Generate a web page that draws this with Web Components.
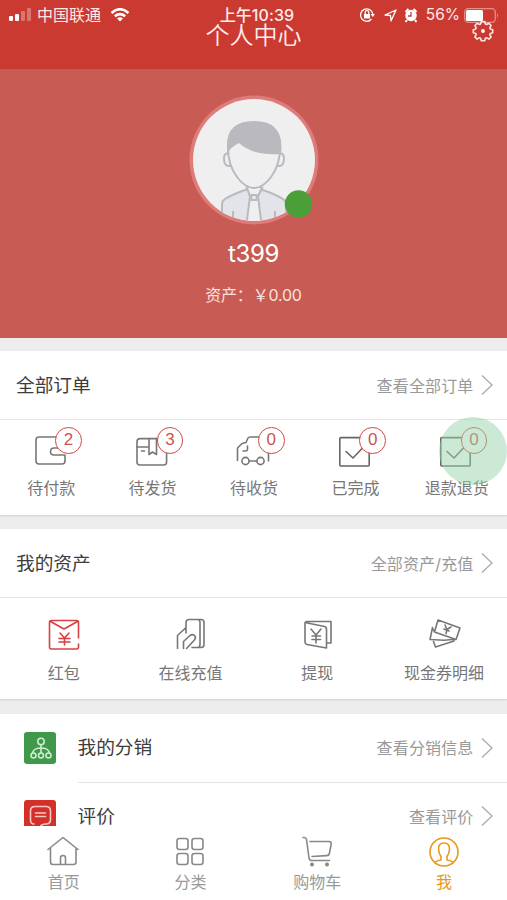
<!DOCTYPE html>
<html lang="zh-CN">
<head>
<meta charset="utf-8">
<title>个人中心</title>
<style>
  html, body { margin: 0; height: 900px; overflow: hidden; background: #ededed; }
  body { font-family: Inter, "Noto Sans CJK SC", sans-serif; }
</style>
</head>
<body>
<member-page></member-page>
<script>
const stroke = (body, c = '#777') => `<g fill="none" stroke="${c}" stroke-width="1.6" stroke-linecap="round" stroke-linejoin="round">${body}</g>`;
const check = stroke('<rect x="0.8" y="2.6" width="29.4" height="28.4" rx="1"/><path d="M7 16.5l7 6.5 10-10.5"/>', '#666');
const ICONS = {
  wallet: stroke('<path d="M30 21.5V26q0 3-3 3H4q-3 0-3-3V5q0-3 3-3H27q3 0 3 3v8H19q-3.5 0-3.5 3.5t3.500 3.500H30z"/>'),
  parcel: stroke('<rect x="1" y="3.6" width="29.6" height="26.4" rx="3"/><path d="M1 12H13M13 3.6V19.5l3.500-2.500 4 2.500V3.6M5.500 16h3"/>'),
  truck: stroke('<path d="M-.5 25.500V13L4 8.500 8 7.500 9.500 4Q10 2 12 2H26M30.500 18V26M9.500 11v3q0 2-2 2H5M11.200 26H18.800"/><circle cx="7.500" cy="26" r="3.600"/><circle cx="22.500" cy="26" r="3.600"/>'),
  check,
  envelope: stroke('<path d="M31.500 19V3.500q0-2-2-2H4.500q-2 0-2 2V28q0 2 2 2H29.500q2 0 2-2v-3M3.500 2.500L17 10 30.500 2.500M13 14l4.500 5 4.500-5M17.500 19v7M12 19.500h11M12 23h11"/>', '#d5423f'),
  card: stroke('<path d="M12 14V3.500Q12 .5 15 .5H27q3 0 3 3V25.500q0 3-3 3H18M23.500 .500q2.500 0 2.500 3V25.500q0 3-2.500 3M11.500 9L3.500 16.500V29.500M9.500 29.500V22.500L16 16.500q3-2 5 .5 1.300 2-1 4.500L12.500 29.500"/>'),
  coupon: stroke('<path d="M4 3.500L23.500 7.500q2 .5 2 3V29L6 25.500Q4 25 4 23zM4 3.500Q5 2.500 6 2.500H30V24H26M10 10l5 6 5-6M15 16v8M11 17h8.500M11 20.500h8.500"/>'),
  notes: stroke('<path d="M10 1L32 9 28 20.500 6.500 13zM4.500 8.500L2 20.500l14 .8 11.500-1M5.500 22.500l2 5.500L26 22M4.500 9l2 4M17 6l2 4.500 4-2.500M19 10.500l-1 4M16 10l5 2"/>'),
  home: stroke('<path d="M1 13.500L16 1.500 31 13.500M3.500 12V26q0 2.500 2.500 2.500H26.500q2.500 0 2.500-2.500V12M13.500 28.500V22q0-2.500 2.500-2.500t2.500 2.500v6.500"/>', '#888'),
  grid: stroke('<rect x="3" y="2.500" width="11" height="11" rx="2.500"/><rect x="18" y="2.500" width="11" height="11" rx="2.500"/><rect x="3" y="17.500" width="11" height="11" rx="2.500"/><rect x="18" y="17.500" width="11" height="11" rx="2.500"/>', '#888'),
  cart: stroke('<path d="M2 1.500H3.500Q5 1.500 5.500 3.500L8 22q.5 2.500 2.500 2.500H28.500M9 5.500H28q2.500 0 2.200 2.500L28.500 17q-.5 2.500-3 2.600L11 20.500"/>', '#888') + '<circle cx="11" cy="28.500" r="2" fill="#888"/><circle cx="26" cy="28.500" r="2" fill="#888"/>',
  me: stroke('<circle cx="16" cy="16" r="14"/><path d="M6.500 26.500Q9 24.500 13 24v-3.500Q10.500 17 10.500 13q0-6 5.500-6t5.500 6q0 4-2.500 7.500V24q4 .5 6.500 2.500"/>', '#e9981f'),
  gear: stroke('<path d="M8.300 1.500h3.400l.7 2.500 1.200.5 2.300-1.300 2.200 2.300-1.300 2.300.5 1.200 2.400.7v3l-2.400.7-.5 1.200 1.300 2.300-2.200 2.200-2.300-1.300-1.200.5-.7 2.500H8.300l-.7-2.500-1.200-.5-2.300 1.300-2.200-2.200 1.300-2.300-.5-1.200-2.400-.7v-3l2.400-.7.5-1.200L1.900 5.500l2.200-2.300 2.300 1.300 1.200-.5z"/>', '#fbe3e0') + '<circle cx="10" cy="11" r="1.900" fill="#fff"/>',
  tree: '<rect width="32" height="32" rx="3" fill="#40994a"/>' + stroke('<circle cx="17" cy="9.500" r="3.200"/><circle cx="9.500" cy="23.500" r="2.500"/><circle cx="17" cy="23.500" r="2.500"/><circle cx="24.500" cy="23.500" r="2.500"/><path d="M17 12.700V21M8.500 21Q9.500 16 17 16t8.500 5"/>', '#cdebcf'),
  comment: '<rect width="32" height="32" rx="3" fill="#d3302a"/>' + stroke('<path d="M10 24Q6.500 24 6.500 20V11q0-4.500 4.500-4.500H22q4.500 0 4.500 4.500v8.500q0 4.500-4.500 4.500-5 0-5.500 3M11.500 13h10M11.500 16.500h10"/>', '#f5c8c5'),
};

class UiIcon extends HTMLElement {
  connectedCallback() {
    const w = this.getAttribute('w') || 32, h = this.getAttribute('h') || w;
    this.attachShadow({mode: 'open'}).innerHTML =
      `<style>:host{display:block;flex:none;width:${w}px;height:${h}px}svg{display:block;overflow:visible}</style>
       <svg width="${w}" height="${h}" viewBox="0 0 ${w} ${h}">${ICONS[this.getAttribute('name')]}</svg>`;
  }
}
customElements.define('ui-icon', UiIcon);

class StatusBar extends HTMLElement {
  connectedCallback() {
    this.attachShadow({mode: 'open'}).innerHTML = `
    <style>
      :host{display:grid;grid-template-columns:1fr auto 1fr;align-items:center;height:30px;padding:0 8px 0 9px;box-sizing:border-box;color:#fbe9e7;font-size:16px;line-height:20px}
      div{display:flex;align-items:center}
      .r{justify-content:flex-end}
      b{font-weight:500;padding-left:6px;color:#fdecea;font-size:16px;letter-spacing:.1px}
      svg{display:block;flex:none}
      .n{margin-left:5px}
      .w{margin-left:9px}
      .p{margin:0 4px 0 9px;font-size:15.500px}
    </style>
    <div>
      <svg width="23" height="14"><g fill="#fff"><rect y="8" width="4" height="5" rx="1"/><rect x="6" y="6" width="4" height="7" rx="1"/><g opacity=".3"><rect x="12" y="3" width="4" height="10" rx="1"/><rect x="18" y="0" width="4" height="13" rx="1"/></g></g></svg>
      <span class="n">中国联通</span>
      <svg class="w" width="20" height="14" fill="none" stroke="#fff" stroke-width="2.600"><path d="M1.500 5Q10-2.500 18.500 5M4.800 8.300Q10 4 15.200 8.300"/><path d="M7 10.500Q10 8 13 10.500L10 13.500z" fill="#fff" stroke="none"/></svg>
    </div>
    <b>上午10:39</b>
    <div class="r">
      <svg width="58" height="16" viewBox="0 0 58 16" fill="none" stroke="#fff" stroke-width="1.300"><path d="M12.500 12A6.200 6.200 0 1 1 13.800 7"/><path d="M11.500 7h4.500l-2.200 3z" fill="#fff" stroke="none"/><rect x="5" y="7" width="6" height="4.500" fill="#fff" stroke="none"/><path d="M6.200 7V5.500a1.800 1.800 0 0 1 3.600 0V7"/><path d="M26 8L37 3l-5 11-.5-5.500z" stroke-linejoin="round"/><circle cx="52" cy="8.500" r="5.700" fill="#fff" stroke="none"/><path d="M46.500 5l3-3M54.500 2l3 3M48 13l-1.500 2M56 13l1.500 2" stroke-width="2"/><path d="M52 5v4h-3" stroke="#cb3a31"/></svg>
      <span class="p">56%</span>
      <svg width="35" height="15"><rect x=".7" y=".7" width="30.600" height="13.600" rx="3.500" fill="none" stroke="#e58e87" stroke-width="1.300"/><rect x="2" y="2" width="17" height="11" rx="1.500" fill="#fff"/><path d="M33 5q2 2.500 0 5z" fill="#e58e87"/></svg>
    </div>`;
  }
}
customElements.define('status-bar', StatusBar);

class PageHeader extends HTMLElement {
  connectedCallback() {
    this.attachShadow({mode: 'open'}).innerHTML = `
    <style>
      :host{display:block;position:relative;height:69px;background:#cb3a31}
      h1{position:absolute;left:0;right:0;top:19px;margin:0;text-align:center;font-weight:350;font-size:24px;line-height:30px;color:#fdeeec;font-family:"Noto Sans CJK SC",sans-serif}
      ui-icon{position:absolute;right:14.500px;top:20px}
    </style>
    <status-bar></status-bar><h1><slot></slot></h1><ui-icon name="gear" w="20" h="22"></ui-icon>`;
  }
}
customElements.define('page-header', PageHeader);

class ProfileHero extends HTMLElement {
  connectedCallback() {
    this.attachShadow({mode: 'open'}).innerHTML = `
    <style>
      :host{display:flex;flex-direction:column;align-items:center;height:269px;background:#c85b53;color:#fff;box-sizing:border-box;padding-top:26px}
      svg{display:block}
      .name{font-size:24px;line-height:30px;margin-top:14px;letter-spacing:-.4px}
      .money{font-size:16px;line-height:20px;margin-top:16px;color:#f8e2df;letter-spacing:-.2px}
    </style>
    <svg width="130" height="130" viewBox="0 0 130 130">
      <defs><clipPath id="c"><circle cx="65" cy="65" r="61"/></clipPath></defs>
      <circle cx="65" cy="65" r="64.500" fill="#dd7c79"/><circle cx="65" cy="65" r="61" fill="#f0eff0"/>
      <g clip-path="url(#c)" stroke="#b9bac0" stroke-width="2">
        <path d="M33 130V109q0-3 3-5 8-5 23-10H71q15 5 23 10 3 2 3 5v21z" fill="#e3e4ea"/>
        <path d="M58 93l3 8-4 32H73l-4-32 4-8z" fill="#f0eff0"/><path d="M58 93l3 8h8l4-8" fill="#f0eff0"/><rect x="62.500" y="100" width="5" height="5" fill="#f0eff0"/>
        <path d="M44 116v14M86 116v14" fill="none"/>
        <path d="M40 59q-5-2-5 5 0 8 7 7M90 59q5-2 5 5 0 8-7 7" fill="#f0eff0"/>
        <path d="M39 53Q39 70 48 82q8 11 17 11t17-11q9-12 9-29L65 35z" fill="#f0eff0"/>
        <path d="M38.500 58Q34 26 65 26T92 59Q64 61 50 48 42 52 38.500 58z" fill="#b9b9be" stroke="none"/>
      </g>
      <circle cx="109.500" cy="109" r="13.700" fill="#4b9f38"/>
    </svg>
    <div class="name"><slot name="name"></slot></div><div class="money"><slot name="money"></slot></div>`;
  }
}
customElements.define('profile-hero', ProfileHero);

class LinkRow extends HTMLElement {
  connectedCallback() {
    this.attachShadow({mode: 'open'}).innerHTML = `
    <style>
      :host{display:flex;align-items:center;box-sizing:border-box;height:69px;padding:0 14.500px 0 16px;background:#fff;border-bottom:1.500px solid #e4e4e4}
      .t{flex:1;font-size:18.700px;line-height:26px;color:#3c3c3c;padding-top:1px}
      .m{font-size:16px;line-height:22px;color:#999;letter-spacing:.15px;padding-top:1px}
      svg{margin-left:7px;flex:none}
    </style>
    <span class="t"><slot></slot></span><span class="m">${this.getAttribute('more')}</span>
    <svg width="12" height="20" fill="none" stroke="#aaa" stroke-width="1.300"><path d="M1 .5L11 10 1 19.500"/></svg>`;
  }
}
customElements.define('link-row', LinkRow);

class IconTile extends HTMLElement {
  connectedCallback() {
    const badge = this.getAttribute('badge');
    this.attachShadow({mode: 'open'}).innerHTML = `
    <style>
      :host{display:flex;flex-direction:column;align-items:center;flex:1 1 0;min-width:0}
      .i{position:relative}
      .b{position:absolute;left:20.500px;top:-8px;width:26.500px;height:26.500px;box-sizing:border-box;border:1.600px solid #cf4a41;border-radius:50%;background:#fff;color:#c9554c;text-align:center;font-family:"Liberation Sans",sans-serif;font-size:17px;line-height:24px}
      .l{margin-top:var(--tile-gap,10px);padding-left:1px;font-size:16px;line-height:22px;white-space:nowrap;color:var(--tile-color,#777)}
      .touch{position:absolute;left:-1px;top:-18px;width:68px;height:68px;border-radius:50%;background:rgba(154,212,174,.5)}
    </style>
    <div class="i"><ui-icon name="${this.getAttribute('icon')}"></ui-icon>${badge ? `<span class="b">${badge}</span>` : ''}${this.hasAttribute('touch') ? '<i class="touch"></i>' : ''}</div>
    <span class="l"><slot></slot></span>`;
  }
}
customElements.define('icon-tile', IconTile);

class ListEntry extends HTMLElement {
  connectedCallback() {
    this.attachShadow({mode: 'open'}).innerHTML = `
    <style>
      :host{display:flex;align-items:center;background:#fff;height:68.500px}
      ui-icon{margin-left:24px;margin-bottom:1px}
      link-row{flex:1;height:68.500px;margin-left:21.500px;padding-left:0}
    </style>
    <ui-icon name="${this.getAttribute('icon')}"></ui-icon><link-row more="${this.getAttribute('more')}"><slot></slot></link-row>`;
  }
}
customElements.define('list-entry', ListEntry);

class MemberPage extends HTMLElement {
  connectedCallback() {
    this.attachShadow({mode: 'open'}).innerHTML = `
    <style>
      :host{display:grid;grid-template-rows:826px 74px;height:900px;width:507px;overflow:hidden}
      main{overflow:hidden}
      section{background:#fff;box-shadow:0 1px 2px #ccc}
      .orders{margin-top:13px;height:164px}
      .assets{margin-top:14px;height:170px}
      .list{margin-top:15px}
      .tiles{display:flex}
      .orders .tiles{padding-top:15px;--tile-gap:10px}
      .assets .tiles{padding-top:21px;--tile-gap:11px}
      nav{display:flex;background:#fff;padding-top:10px;--tile-gap:2.500px;--tile-color:#999}
      .on{--tile-color:#e9981f}
    </style>
    <main>
      <page-header>个人中心</page-header>
      <profile-hero><span slot="name">t399</span><span slot="money">资产：￥0.00</span></profile-hero>
      <section class="orders">
        <link-row more="查看全部订单">全部订单</link-row>
        <div class="tiles">
          <icon-tile icon="wallet" badge="2">待付款</icon-tile>
          <icon-tile icon="parcel" badge="3">待发货</icon-tile>
          <icon-tile icon="truck" badge="0">待收货</icon-tile>
          <icon-tile icon="check" badge="0">已完成</icon-tile>
          <icon-tile icon="check" badge="0" touch>退款退货</icon-tile>
        </div>
      </section>
      <section class="assets">
        <link-row more="全部资产/充值">我的资产</link-row>
        <div class="tiles">
          <icon-tile icon="envelope">红包</icon-tile>
          <icon-tile icon="card">在线充值</icon-tile>
          <icon-tile icon="coupon">提现</icon-tile>
          <icon-tile icon="notes">现金券明细</icon-tile>
        </div>
      </section>
      <section class="list">
        <list-entry icon="tree" more="查看分销信息">我的分销</list-entry>
        <list-entry icon="comment" more="查看评价">评价</list-entry>
      </section>
    </main>
    <nav>
      <icon-tile icon="home">首页</icon-tile>
      <icon-tile icon="grid">分类</icon-tile>
      <icon-tile icon="cart">购物车</icon-tile>
      <icon-tile icon="me" class="on">我</icon-tile>
    </nav>`;
  }
}
customElements.define('member-page', MemberPage);
</script>
</body>
</html>
